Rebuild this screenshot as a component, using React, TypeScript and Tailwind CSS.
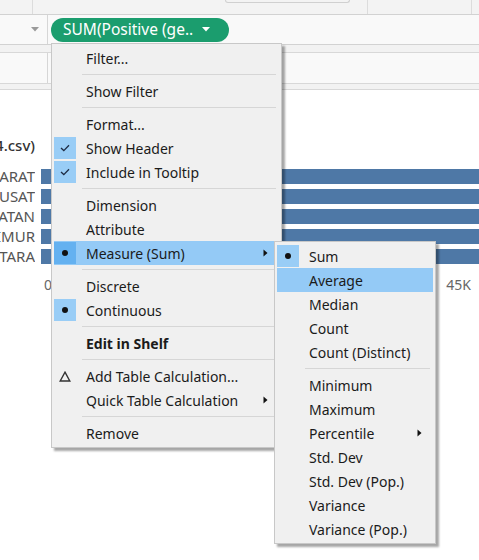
import React from "react";

type Item =
  | { kind: "sep" }
  | {
      kind: "item";
      label: string;
      mark?: "check" | "dot" | "delta";
      sub?: boolean;
      active?: boolean;
      bold?: boolean;
    };

const mainMenu: Item[] = [
  { kind: "item", label: "Filter..." },
  { kind: "sep" },
  { kind: "item", label: "Show Filter" },
  { kind: "sep" },
  { kind: "item", label: "Format..." },
  { kind: "item", label: "Show Header", mark: "check" },
  { kind: "item", label: "Include in Tooltip", mark: "check" },
  { kind: "sep" },
  { kind: "item", label: "Dimension" },
  { kind: "item", label: "Attribute" },
  { kind: "item", label: "Measure (Sum)", mark: "dot", sub: true, active: true },
  { kind: "sep" },
  { kind: "item", label: "Discrete" },
  { kind: "item", label: "Continuous", mark: "dot" },
  { kind: "sep" },
  { kind: "item", label: "Edit in Shelf", bold: true },
  { kind: "sep" },
  { kind: "item", label: "Add Table Calculation...", mark: "delta" },
  { kind: "item", label: "Quick Table Calculation", sub: true },
  { kind: "sep" },
  { kind: "item", label: "Remove" },
];

const subMenu: Item[] = [
  { kind: "item", label: "Sum", mark: "dot" },
  { kind: "item", label: "Average", active: true },
  { kind: "item", label: "Median" },
  { kind: "item", label: "Count" },
  { kind: "item", label: "Count (Distinct)" },
  { kind: "sep" },
  { kind: "item", label: "Minimum" },
  { kind: "item", label: "Maximum" },
  { kind: "item", label: "Percentile", sub: true },
  { kind: "item", label: "Std. Dev" },
  { kind: "item", label: "Std. Dev (Pop.)" },
  { kind: "item", label: "Variance" },
  { kind: "item", label: "Variance (Pop.)" },
];

// row headers are wider than their column, so only the tail shows
const rows = ["JAWA BARAT", "JAKARTA PUSAT", "JAKARTA SELATAN", "JAKARTA TIMUR", "JAKARTA UTARA"];

function Mark({ mark, active }: { mark?: string; active?: boolean }) {
  if (!mark) return <div className="w-[22px] h-[22px]" />;
  if (mark === "delta")
    return (
      <div className="w-[22px] h-[22px] flex items-center justify-center">
        <svg width="12" height="11" viewBox="0 0 12 11">
          <path d="M6 1.2 L10.8 10 L1.2 10 Z" fill="none" stroke="#333" strokeWidth="1.4" />
        </svg>
      </div>
    );
  return (
    <div
      className={
        "w-[22px] h-[22px] flex items-center justify-center " +
        (active ? "bg-[#64b1f0]" : "bg-[#99cdf6]")
      }
    >
      {mark === "check" ? (
        <svg width="10" height="8" viewBox="0 0 10 8">
          <path d="M1 4 L3.8 6.6 L9 1.2" fill="none" stroke="#1e2c44" strokeWidth="1.3" />
        </svg>
      ) : (
        <div className="w-[6px] h-[6px] rounded-full bg-[#111]" />
      )}
    </div>
  );
}

function SubArrow() {
  return (
    <svg width="5" height="8" viewBox="0 0 5 8">
      <path d="M0.5 0.5 L4.5 4 L0.5 7.5 Z" fill="#111" />
    </svg>
  );
}

function Menu({ items, className }: { items: Item[]; className: string }) {
  return (
    <div
      className={
        "absolute bg-[#f0f0f0] border border-[#c8c8c8] p-[2px] shadow-[3px_3px_2px_rgba(0,0,0,0.35)] " +
        className
      }
    >
      {items.map((it, i) =>
        it.kind === "sep" ? (
          <div key={i} className="h-[9px] flex items-center ml-[28px] mr-[3px]">
            <div className="h-px w-full bg-[#d6d6d6]" />
          </div>
        ) : (
          <div
            key={i}
            className={
              "h-6 flex items-center text-[14px] text-[#1b1b1b] " +
              (it.active ? "bg-[#94caf6] " : "") +
              (it.bold ? "font-bold" : "")
            }
          >
            <Mark mark={it.mark} active={it.active} />
            <span className="flex-1 ml-[10px]">{it.label}</span>
            {it.sub && (
              <span className="w-[16px] flex items-center">
                <SubArrow />
              </span>
            )}
          </div>
        )
      )}
    </div>
  );
}

export default function App() {
  return (
    <div className="relative w-[479px] h-[560px] overflow-hidden bg-white font-['Noto_Sans','Open_Sans',sans-serif]">
      {/* toolbar strip */}
      <div className="h-[15px] bg-[#f3f3f3] border-b border-[#d2d2d2] flex">
        <div className="w-[33px] border-r border-[#dcdcdc]" />
        <div className="w-[192px]" />
        <div className="w-[125px] h-[3px] border border-t-0 border-[#d0d0d0] rounded-b-sm" />
        <div className="w-[18px] border-r border-[#dcdcdc]" />
        <div className="w-[104px] border-r border-[#dcdcdc]" />
      </div>

      {/* rows shelf */}
      <div className="h-[30px] bg-[#f9f9f9] border-b border-[#d2d2d2] flex items-center">
        <div className="w-[48px] h-full border-r border-[#d6d6d6] flex items-center justify-end pr-[8px]">
          <svg width="8" height="5" viewBox="0 0 8 5">
            <path d="M0 0 L8 0 L4 4.5 Z" fill="#9a9a9a" />
          </svg>
        </div>
        <div className="ml-[3px] h-[24px] w-[178px] rounded-full bg-[#1b9d6e] text-white text-[15.5px] flex items-center pl-[12px]">
          <span>SUM(Positive (ge..</span>
          <svg className="ml-[9px]" width="8" height="5" viewBox="0 0 8 5">
            <path d="M0 0 L8 0 L4 4.5 Z" fill="#fff" />
          </svg>
        </div>
      </div>
      <div className="h-[8px] bg-[#f2f2f2] border-b border-[#d8d8d8]" />
      <div className="h-[31px] bg-[#f9f9f9] border-b border-[#d8d8d8] flex">
        <div className="w-[48px] border-r border-[#d6d6d6]" />
      </div>
      <div className="h-[6px] bg-[#f2f2f2] border-b border-[#d8d8d8]" />

      {/* chart */}
      <div className="pt-[45px]">
        <div className="h-[20px] flex items-center">
          <div className="w-[35px] overflow-hidden flex justify-end">
            <span className="whitespace-nowrap text-[15px] font-medium text-[#333]">data_2024.csv)</span>
          </div>
        </div>
        <div className="mt-[11px] flex flex-col">
          {rows.map((r) => (
            <div key={r} className="h-[20px] flex items-center">
              <div className="w-[35px] shrink-0 overflow-hidden flex justify-end">
                <span className="whitespace-nowrap text-[15px] text-[#555]">{r}</span>
              </div>
              <div className="ml-[6px] flex-1 h-[15px] bg-[#4e78a6]" />
            </div>
          ))}
        </div>
        <div className="mt-[8px] h-[20px] flex items-center text-[14px] text-[#666]">
          <span className="ml-[44px]">0</span>
          <span className="ml-auto mr-[8px]">45K</span>
        </div>
      </div>

      <Menu items={mainMenu} className="left-[51px] top-[43px] w-[231px]" />
      <Menu items={subMenu} className="left-[274px] top-[241px] w-[162px]" />
    </div>
  );
}
